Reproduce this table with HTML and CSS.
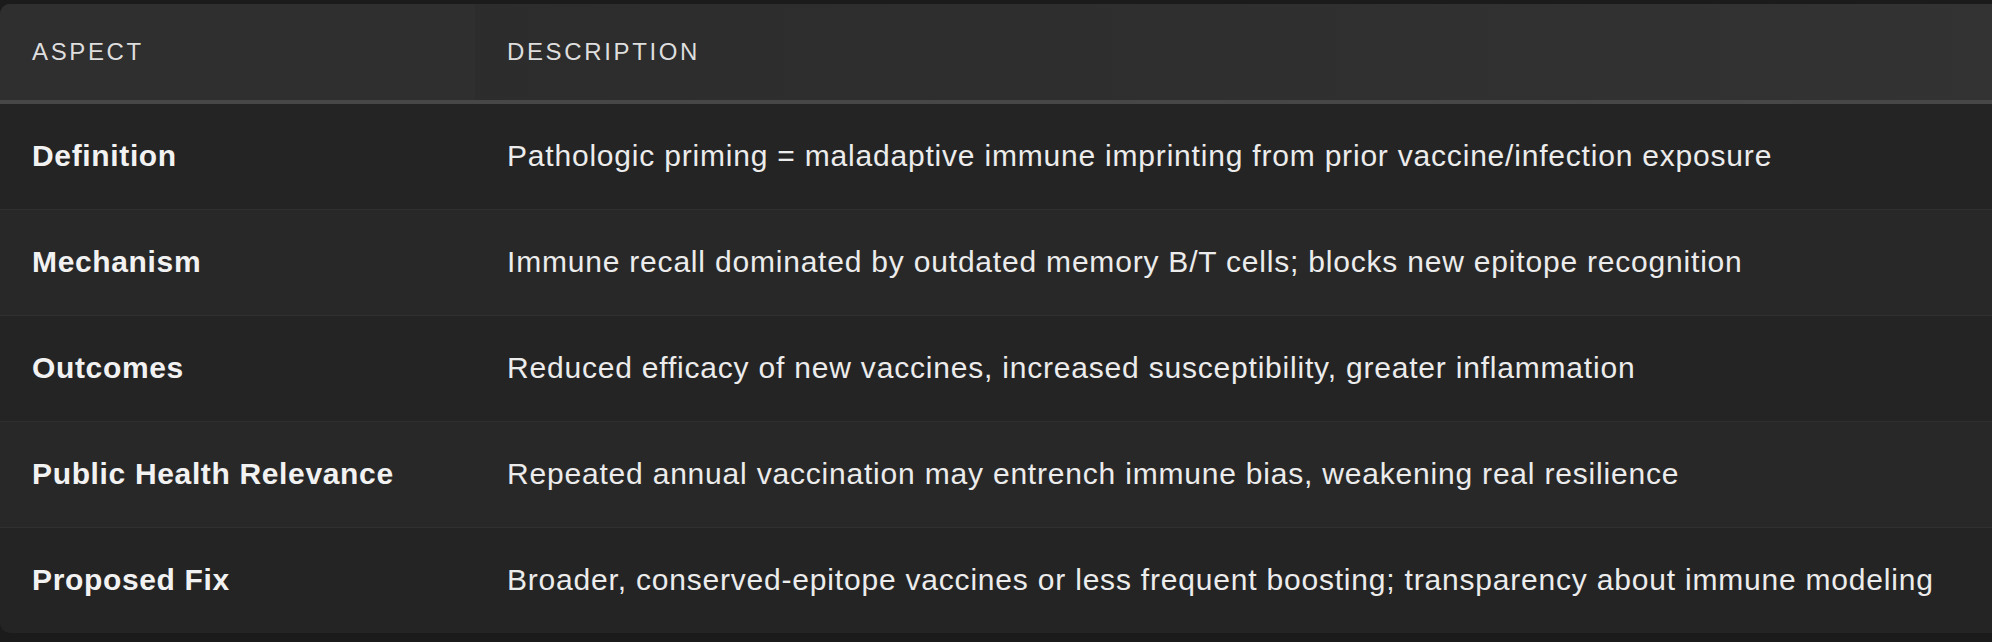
FILE: index.html
```html
<!DOCTYPE html>
<html lang="en">
<head>
<meta charset="utf-8">
<title>Pathologic priming</title>
<link rel="stylesheet" href="styles.css">
</head>
<body>
<div class="page">
  <div class="card">
    <table class="grid">
      <thead>
        <tr>
          <th class="col-aspect">Aspect</th>
          <th class="col-desc">Description</th>
        </tr>
      </thead>
      <tbody>
        <tr>
          <td class="aspect">Definition</td>
          <td class="desc">Pathologic priming = maladaptive immune imprinting from prior vaccine/infection exposure</td>
        </tr>
        <tr>
          <td class="aspect">Mechanism</td>
          <td class="desc">Immune recall dominated by outdated memory B/T cells; blocks new epitope recognition</td>
        </tr>
        <tr>
          <td class="aspect">Outcomes</td>
          <td class="desc">Reduced efficacy of new vaccines, increased susceptibility, greater inflammation</td>
        </tr>
        <tr>
          <td class="aspect">Public Health Relevance</td>
          <td class="desc">Repeated annual vaccination may entrench immune bias, weakening real resilience</td>
        </tr>
        <tr>
          <td class="aspect">Proposed Fix</td>
          <td class="desc">Broader, conserved-epitope vaccines or less frequent boosting; transparency about immune modeling</td>
        </tr>
      </tbody>
    </table>
  </div>
</div>
</body>
</html>
```

FILE: styles.css
```css
html, body {
  margin: 0;
  padding: 0;
  background: #1b1b1b;
  overflow: hidden;
}

.page {
  padding-top: 4px;
  width: 1992px;
  overflow: hidden;
}

.card {
  width: 2040px;
  background: #242424;
  border-radius: 10px;
  overflow: hidden;
  font-family: "Liberation Sans", Arial, sans-serif;
}

.grid {
  width: 100%;
  border-collapse: collapse;
  table-layout: fixed;
}

.grid thead tr {
  background: linear-gradient(90deg, #2b2b2b 0%, #2e2e2e 50%, #333333 100%);
  border-bottom: 4px solid #474747;
}

.grid th {
  text-align: left;
  font-weight: 400;
  font-size: 24px;
  line-height: 36px;
  letter-spacing: 0.11em;
  text-transform: uppercase;
  color: #dedede;
  padding: 30px 32px;
}

.grid th.col-aspect {
  width: 411px;
  background: #2f2f2f;
}

.grid td {
  font-size: 30px;
  line-height: 45px;
  padding: 29px 32px 31px;
  color: #ececec;
  white-space: nowrap;
  letter-spacing: 0.8px;
}

.grid tbody tr {
  border-top: 1px solid #303030;
}

.grid tbody tr:first-child {
  border-top: none;
}

.grid tbody tr:nth-child(even) {
  background: #282828;
}

.grid td.aspect {
  font-weight: 700;
  color: #f2f2f2;
  letter-spacing: 0.65px;
}
```
